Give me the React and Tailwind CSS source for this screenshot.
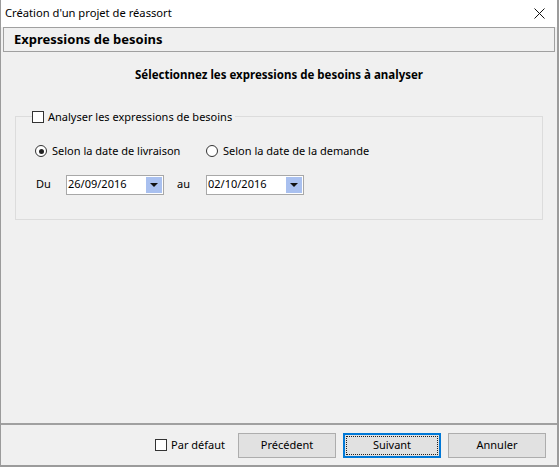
import React from 'react';

function Checkbox({ label, className = '' }) {
  return (
    <label className={`flex items-center gap-[4px] ${className}`}>
      <span className="w-[12px] h-[12px] border border-[#333] bg-white shrink-0" />
      <span>{label}</span>
    </label>
  );
}

function Radio({ label, checked }) {
  return (
    <label className="flex items-center gap-[5px]">
      <span className="w-[12px] h-[12px] rounded-full border border-[#333] bg-white flex items-center justify-center shrink-0">
        {checked && <span className="w-[5px] h-[5px] rounded-full bg-[#222]" />}
      </span>
      <span>{label}</span>
    </label>
  );
}

function DateField({ value }) {
  return (
    <div className="w-[98px] h-[20px] border border-[#a8a8a8] bg-white flex items-stretch">
      <span className="flex-1 pl-[1px] leading-[16px]">{value}</span>
      <span className="w-[16px] my-[1px] mr-[1px] bg-[#a9c0ef] flex items-center justify-center">
        <svg width="8" height="4" viewBox="0 0 8 4">
          <path d="M0 0H8L4 4Z" fill="#111" />
        </svg>
      </span>
    </div>
  );
}

function Button({ children, focused }) {
  return (
    <button
      className={`w-[98px] h-[25px] bg-[#e1e1e1] flex items-center justify-center ${
        focused ? 'border-2 border-[#0078d7]' : 'border border-[#adadad]'
      }`}
    >
      {focused ? (
        <span className="w-[92px] h-[19px] border border-dotted border-[#222] flex items-center justify-center">
          {children}
        </span>
      ) : (
        children
      )}
    </button>
  );
}

export default function App() {
  return (
    <div
      className="w-[559px] h-[467px] flex flex-col bg-[#f0f0f0] border-l border-r-2 border-b-2 border-[#9b9b9b] text-[11px] text-black"
      style={{ fontFamily: '"Noto Sans", sans-serif' }}
    >
      {/* title bar */}
      <div className="h-[27px] bg-white flex items-center justify-between pl-[4px] pr-[12px] shrink-0 text-[11.2px]">
        <span>Création d'un projet de réassort</span>
        <svg width="11" height="11" viewBox="0 0 11 11">
          <path d="M0.5 0.5L10.5 10.5M10.5 0.5L0.5 10.5" stroke="#111" strokeWidth="1" />
        </svg>
      </div>

      {/* step header */}
      <div className="mx-[2px] h-[25px] border border-[#a0a0a0] flex items-center pl-[10px] font-bold text-[13px] shrink-0">
        Expressions de besoins
      </div>

      <div className="flex-1 flex flex-col">
        <div className="text-center font-bold text-[11.5px] pt-[14px] h-[64px]">
          Sélectionnez les expressions de besoins à analyser
        </div>

        {/* group box */}
        <div className="relative mx-[14px] h-[104px] border border-[#dcdcdc]">
          <div className="absolute left-[16px] top-[-8px] bg-[#f0f0f0] pr-[3px]">
            <Checkbox label="Analyser les expressions de besoins" />
          </div>
          <div className="flex items-center pl-[19px] pt-[26px]">
            <div className="w-[171px]">
              <Radio label="Selon la date de livraison" checked />
            </div>
            <Radio label="Selon la date de la demande" />
          </div>
          <div className="flex items-center pl-[20px] pt-[15px]">
            <span className="w-[30px]">Du</span>
            <DateField value="26/09/2016" />
            <span className="w-[42px] pl-[13px]">au</span>
            <DateField value="02/10/2016" />
          </div>
        </div>
      </div>

      {/* footer */}
      <div className="h-[42px] border-t-2 border-[#a0a0a0] flex items-center justify-end pr-[11px] shrink-0">
        <Checkbox label="Par défaut" className="mr-[13px]" />
        <div className="flex gap-[7px]">
          <Button>Précédent</Button>
          <Button focused>Suivant</Button>
          <Button>Annuler</Button>
        </div>
      </div>
    </div>
  );
}
